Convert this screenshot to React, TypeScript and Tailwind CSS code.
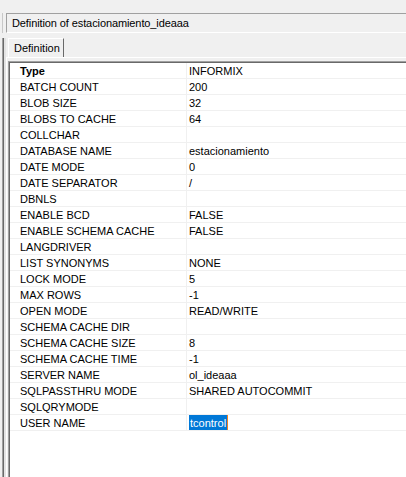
import React from "react";

const rows: [string, string][] = [
  ["Type", "INFORMIX"],
  ["BATCH COUNT", "200"],
  ["BLOB SIZE", "32"],
  ["BLOBS TO CACHE", "64"],
  ["COLLCHAR", ""],
  ["DATABASE NAME", "estacionamiento"],
  ["DATE MODE", "0"],
  ["DATE SEPARATOR", "/"],
  ["DBNLS", ""],
  ["ENABLE BCD", "FALSE"],
  ["ENABLE SCHEMA CACHE", "FALSE"],
  ["LANGDRIVER", ""],
  ["LIST SYNONYMS", "NONE"],
  ["LOCK MODE", "5"],
  ["MAX ROWS", "-1"],
  ["OPEN MODE", "READ/WRITE"],
  ["SCHEMA CACHE DIR", ""],
  ["SCHEMA CACHE SIZE", "8"],
  ["SCHEMA CACHE TIME", "-1"],
  ["SERVER NAME", "ol_ideaaa"],
  ["SQLPASSTHRU MODE", "SHARED AUTOCOMMIT"],
  ["SQLQRYMODE", ""],
  ["USER NAME", "tcontrol"],
];

export default function App() {
  return (
    <div className="w-[406px] h-[477px] bg-[#f0f0f0] overflow-hidden flex flex-col pt-[13px] text-[11px] text-black font-['Liberation_Sans',Arial,sans-serif]">
      {/* title */}
      <div className="flex h-[20px] shrink-0">
        <div className="w-[2px]" />
        <div className="w-px bg-[#c8c8c8]" />
        <div className="w-[3px]" />
        <div className="flex-1 border-t border-l border-b border-t-[#a0a0a0] border-l-[#a0a0a0] border-b-white pl-[5px] leading-[18px] whitespace-nowrap tracking-[-0.1px]">
          Definition of estacionamiento_ideaaa
        </div>
      </div>

      <div className="flex flex-1 mt-[5px]">
        {/* left frame */}
        <div className="w-[2px]" />
        <div className="w-px bg-[#a0a0a0]" />
        <div className="w-px bg-[#696969]" />
        <div className="w-[2px] bg-[#e3e3e3]" />

        <div className="flex-1 flex flex-col">
          {/* tab strip */}
          <div className="flex h-[19px] shrink-0">
            <div className="w-[2px]" />
            <div className="w-[56px] border-t border-l border-r border-t-white border-l-white border-r-[#696969] pl-[5px] leading-[19px] bg-[#f0f0f0]">
              Definition
            </div>
          </div>

          {/* tab panel */}
          <div className="flex-1 flex flex-col border-t border-l border-white pt-[3px] pl-[1px]">
            <div className="flex-1 flex flex-col border-t border-l border-t-[#a0a0a0] border-l-[#a0a0a0]">
              <div className="flex-1 flex flex-col border-t border-l border-t-[#696969] border-l-[#696969] bg-white">
                {rows.map(([name, value], i) => (
                  <div key={name} className="flex h-[16px] border-b border-[#f0f0f0]">
                    <div className={`w-[177px] shrink-0 pl-[10px] leading-[17px] border-r border-[#f0f0f0] whitespace-nowrap ${i === 0 ? "font-bold" : ""}`}>
                      {name}
                    </div>
                    <div className="flex-1 pl-[2px] leading-[17px] whitespace-nowrap">
                      {name === "USER NAME" ? (
                        <span className="inline-flex h-[15px] items-center align-top">
                          <span className="bg-[#0078d7] text-white h-[15px] leading-[16px] px-px">{value}</span>
                          <span className="w-px h-[15px] bg-[#f08020]" />
                        </span>
                      ) : (
                        value
                      )}
                    </div>
                  </div>
                ))}
              </div>
            </div>
          </div>
        </div>
      </div>
    </div>
  );
}
